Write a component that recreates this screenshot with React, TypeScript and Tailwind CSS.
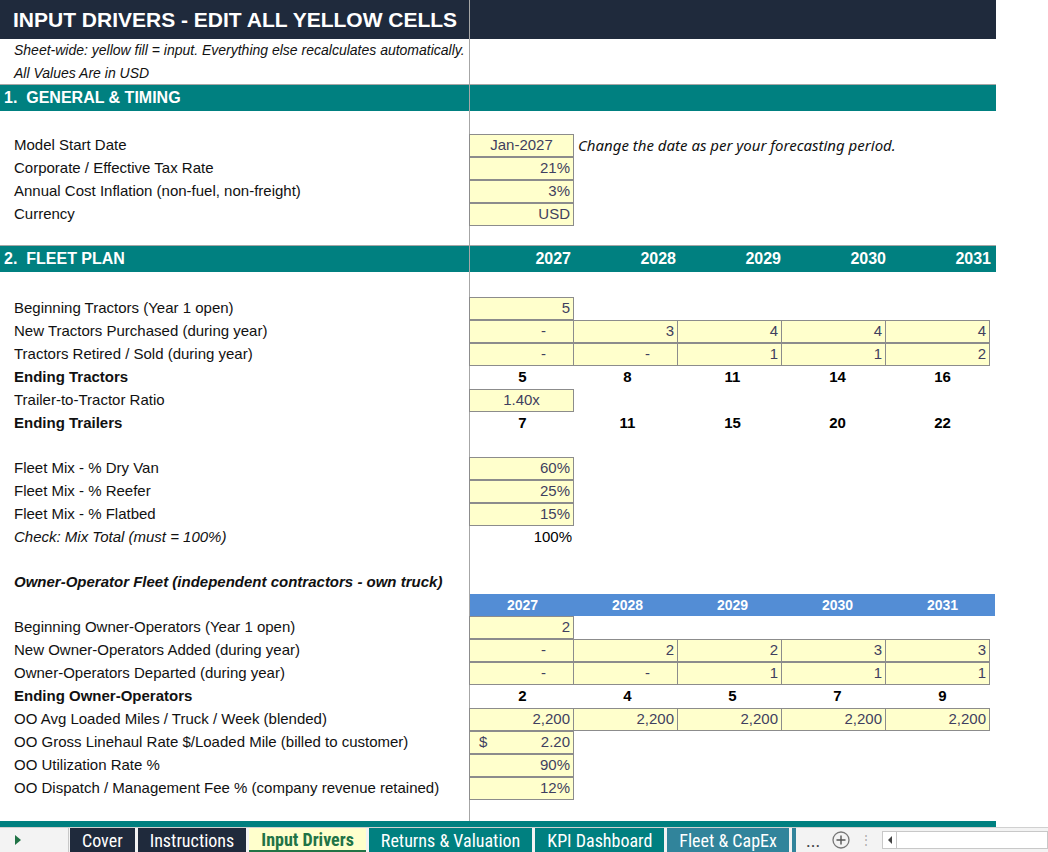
import React from "react";

type Cell = { v?: string; y?: boolean; b?: boolean; align?: "r" | "c"; dollar?: boolean };
const W = [105, 105, 105, 105, 105];

function Cells({ cells, only }: { cells: Cell[]; only?: boolean }) {
  const list = only ? W.slice(0, cells.length) : W;
  return (
    <>
      {list.map((w, i) => {
        const c = cells[i];
        if (!c) return <div key={i} className="w-[105px] shrink-0" />;
        return (
          <div
            key={i}
            className={`w-[105px] shrink-0 flex items-center px-[3px] ${c.y ? "bg-[#ffffcc] border border-[#8c8c8c] -ml-px first:ml-0 text-[#3f3f5f]" : "text-black"} ${c.align === "c" ? "justify-center" : "justify-end"} ${c.b ? "font-bold" : ""}`}
          >
            {c.dollar && <span className="mr-auto pl-[6px]">$</span>}
            <span className={c.v === "-" ? "pr-[24px]" : ""}>{c.v}</span>
          </div>
        );
      })}
    </>
  );
}

function Row({ label, h = 23, bold, italic, cells = [], extra }: { label?: string; h?: number; bold?: boolean; italic?: boolean; cells?: Cell[]; extra?: React.ReactNode }) {
  return (
    <div className="flex" style={{ height: h }}>
      <div className={`w-[470px] shrink-0 border-r border-[#a6a6a6] pl-[14px] flex items-center whitespace-nowrap ${bold ? "font-bold" : ""} ${italic ? "italic" : ""}`}>{label}</div>
      <Cells cells={cells} only={!!extra} />
      {extra}
    </div>
  );
}

const y = (v: string, extra: Partial<Cell> = {}): Cell => ({ v, y: true, ...extra });
const b = (v: string): Cell => ({ v, b: true, align: "c" });

function Section({ title, years }: { title: string; years?: boolean }) {
  return (
    <div className="flex h-[27px] w-[996px] bg-[#008080] text-white font-bold text-[16px] border-t border-[#a6a6a6]">
      <div className="w-[470px] shrink-0 border-r border-[#a6a6a6] pl-[4px] flex items-center whitespace-pre">{title}</div>
      {years &&
        ["2027", "2028", "2029", "2030", "2031"].map((t) => (
          <div key={t} className="w-[105px] flex items-center justify-end pr-[4px]">{t}</div>
        ))}
    </div>
  );
}

export default function App() {
  return (
    <div className="w-[1048px] h-[852px] bg-white overflow-hidden relative text-[15px] text-[#111]" style={{ fontFamily: '"Liberation Sans", Arial, sans-serif' }}>
      <div className="flex h-[39px] bg-[#1f2a3c] w-[996px]">
        <div className="w-[470px] border-r border-[#a6a6a6] pl-[13px] flex items-center text-white font-bold text-[21px] whitespace-nowrap">INPUT DRIVERS - EDIT ALL YELLOW CELLS</div>
      </div>
      <div className="text-[14px]">
        <Row h={23} italic label="Sheet-wide: yellow fill = input. Everything else recalculates automatically." />
        <Row h={22} italic label="All Values Are in USD" />
      </div>
      <Section title="1.  GENERAL & TIMING" />
      <Row />
      <Row label="Model Start Date" cells={[y("Jan-2027", { align: "c" })]} extra={<div className="flex items-center pl-[4px] italic text-[15px] whitespace-nowrap" style={{ fontFamily: '"Noto Sans", sans-serif' }}>Change the date as per your forecasting period.</div>} />
      <Row label="Corporate / Effective Tax Rate" cells={[y("21%")]} />
      <Row label="Annual Cost Inflation (non-fuel, non-freight)" cells={[y("3%")]} />
      <Row label="Currency" cells={[y("USD")]} />
      <Row h={19} />
      <Section title="2.  FLEET PLAN" years />
      <Row h={25} />
      <Row label="Beginning Tractors (Year 1 open)" cells={[y("5")]} />
      <Row label="New Tractors Purchased (during year)" cells={[y("-"), y("3"), y("4"), y("4"), y("4")]} />
      <Row label="Tractors Retired / Sold (during year)" cells={[y("-"), y("-"), y("1"), y("1"), y("2")]} />
      <Row bold label="Ending Tractors" cells={[b("5"), b("8"), b("11"), b("14"), b("16")]} />
      <Row label="Trailer-to-Tractor Ratio" cells={[y("1.40x", { align: "c" })]} />
      <Row bold label="Ending Trailers" cells={[b("7"), b("11"), b("15"), b("20"), b("22")]} />
      <Row h={22} />
      <Row label="Fleet Mix - % Dry Van" cells={[y("60%")]} />
      <Row label="Fleet Mix - % Reefer" cells={[y("25%")]} />
      <Row label="Fleet Mix - % Flatbed" cells={[y("15%")]} />
      <Row italic label="Check: Mix Total (must = 100%)" cells={[{ v: "100%" }]} />
      <Row h={22} />
      <Row bold italic label="Owner-Operator Fleet (independent contractors - own truck)" />
      <div className="flex h-[22px]">
        <div className="w-[470px] shrink-0 border-r border-[#a6a6a6]" />
        <div className="flex w-[525px] bg-[#538dd5] text-white font-bold text-[14px]">
          {["2027", "2028", "2029", "2030", "2031"].map((t) => (
            <div key={t} className="w-[105px] flex items-center justify-center">{t}</div>
          ))}
        </div>
      </div>
      <Row label="Beginning Owner-Operators (Year 1 open)" cells={[y("2")]} />
      <Row label="New Owner-Operators Added (during year)" cells={[y("-"), y("2"), y("2"), y("3"), y("3")]} />
      <Row label="Owner-Operators Departed (during year)" cells={[y("-"), y("-"), y("1"), y("1"), y("1")]} />
      <Row bold label="Ending Owner-Operators" cells={[b("2"), b("4"), b("5"), b("7"), b("9")]} />
      <Row label="OO Avg Loaded Miles / Truck / Week (blended)" cells={[y("2,200"), y("2,200"), y("2,200"), y("2,200"), y("2,200")]} />
      <Row label="OO Gross Linehaul Rate $/Loaded Mile (billed to customer)" cells={[y("2.20", { dollar: true })]} />
      <Row label="OO Utilization Rate %" cells={[y("90%")]} />
      <Row label="OO Dispatch / Management Fee % (company revenue retained)" cells={[y("12%")]} />
      <Row h={21} />
      <div className="h-[6px] w-[996px] bg-[#008080]" />

      <div className="absolute left-0 bottom-0 w-[1048px] h-[25px] bg-[#f3f3f3] border-t border-[#d0d0d0] flex items-stretch text-[18px]" style={{ fontFamily: '"Liberation Sans Narrow", "Roboto Condensed", Roboto, sans-serif' }}>
        <div className="w-[35px] flex items-center justify-center">
          <svg width="6" height="10" viewBox="0 0 6 10"><path d="M0 0L6 5L0 10Z" fill="#217346" /></svg>
        </div>
        <div className="w-[34px] border-r border-[#c8c8c8]" />
        <div className="flex gap-[3px] pl-[1px]">
          <div className="px-[12px] bg-[#1f2a3c] text-white flex items-center">Cover</div>
          <div className="px-[12px] bg-[#1f2a3c] text-white flex items-center">Instructions</div>
          <div className="px-[12px] bg-[#ffffcc] text-[#217346] font-bold flex items-center border-b-2 border-[#217346]">Input Drivers</div>
          <div className="px-[12px] bg-[#008080] text-white flex items-center">Returns &amp; Valuation</div>
          <div className="px-[12px] bg-[#008080] text-white flex items-center">KPI Dashboard</div>
          <div className="px-[12px] bg-[#31849b] text-white flex items-center">Fleet &amp; CapEx</div>
          <div className="w-[4px] bg-[#31849b]" />
        </div>
        <div className="pl-[10px] flex items-center text-[#444]">...</div>
        <div className="pl-[12px] flex items-center">
          <svg width="18" height="18" viewBox="0 0 18 18"><circle cx="9" cy="9" r="8" fill="none" stroke="#777" strokeWidth="1.3" /><path d="M9 4.5v9M4.5 9h9" stroke="#555" strokeWidth="1.4" /></svg>
        </div>
        <div className="pl-[10px] flex items-center text-[#aaa] text-[12px]">⋮</div>
        <div className="ml-[10px] my-[3px] flex-1 bg-white border border-[#c8c8c8] flex items-center">
          <div className="w-[14px] h-full border-r border-[#c8c8c8] flex items-center justify-center">
            <svg width="4" height="8" viewBox="0 0 4 8"><path d="M4 0L0 4L4 8Z" fill="#444" /></svg>
          </div>
        </div>
      </div>
    </div>
  );
}
